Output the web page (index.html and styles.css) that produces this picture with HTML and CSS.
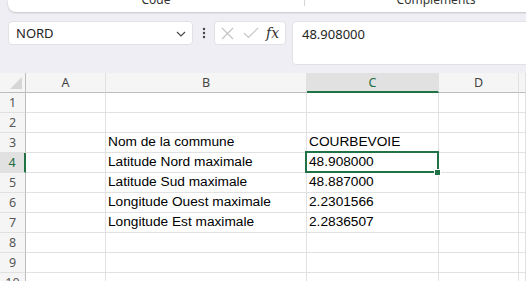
FILE: index.html
```html
<!DOCTYPE html>
<html>
<head>
    <title>Classeur - Communes</title>
    <link rel="stylesheet" href="styles.css">
</head>
<body>
    <div class="ribbon">
        <div class="group group-code"><span>Code</span></div>
        <div class="group group-comp"><span>Compléments</span></div>
    </div>

    <div class="toolbar">
        <div class="namebox">
            <span>NORD</span>
            <svg class="chevron" width="10" height="6" viewBox="0 0 10 6"><path d="M1 1 L5 5 L9 1" fill="none" stroke="#444" stroke-width="1.1"/></svg>
        </div>
        <div class="dots">
            <svg width="4" height="12" viewBox="0 0 4 12"><circle cx="2" cy="2" r="1.2" fill="#444"/><circle cx="2" cy="6" r="1.2" fill="#444"/><circle cx="2" cy="10" r="1.2" fill="#444"/></svg>
        </div>
        <div class="fxbox">
            <svg width="13" height="13" viewBox="0 0 13 13"><path d="M1 1 L12 12 M12 1 L1 12" stroke="#c4c4c4" stroke-width="1.1"/></svg>
            <svg width="16" height="12" viewBox="0 0 16 12"><path d="M1 6 L5.5 10.5 L15 1" fill="none" stroke="#c4c4c4" stroke-width="1.1"/></svg>
            <span class="fx">fx</span>
        </div>
        <div class="formula">48.908000</div>
    </div>

    <div class="sheet">
        <div class="row head">
            <div class="cell corner"><span class="tri"></span></div>
            <div class="cell col">A</div>
            <div class="cell col">B</div>
            <div class="cell col active">C</div>
            <div class="cell col">D</div>
            <div class="cell col"></div>
        </div>
        <div class="row">
            <div class="cell num">1</div>
            <div class="cell"></div><div class="cell"></div><div class="cell"></div><div class="cell"></div><div class="cell"></div>
        </div>
        <div class="row">
            <div class="cell num">2</div>
            <div class="cell"></div><div class="cell"></div><div class="cell"></div><div class="cell"></div><div class="cell"></div>
        </div>
        <div class="row">
            <div class="cell num">3</div>
            <div class="cell"></div><div class="cell">Nom de la commune</div><div class="cell">COURBEVOIE</div><div class="cell"></div><div class="cell"></div>
        </div>
        <div class="row">
            <div class="cell num active">4</div>
            <div class="cell"></div><div class="cell">Latitude Nord maximale</div>
            <div class="cell selected">48.908000<span class="handle"></span></div>
            <div class="cell"></div><div class="cell"></div>
        </div>
        <div class="row">
            <div class="cell num">5</div>
            <div class="cell"></div><div class="cell">Latitude Sud maximale</div><div class="cell">48.887000</div><div class="cell"></div><div class="cell"></div>
        </div>
        <div class="row">
            <div class="cell num">6</div>
            <div class="cell"></div><div class="cell">Longitude Ouest maximale</div><div class="cell">2.2301566</div><div class="cell"></div><div class="cell"></div>
        </div>
        <div class="row">
            <div class="cell num">7</div>
            <div class="cell"></div><div class="cell">Longitude Est maximale</div><div class="cell">2.2836507</div><div class="cell"></div><div class="cell"></div>
        </div>
        <div class="row">
            <div class="cell num">8</div>
            <div class="cell"></div><div class="cell"></div><div class="cell"></div><div class="cell"></div><div class="cell"></div>
        </div>
        <div class="row">
            <div class="cell num">9</div>
            <div class="cell"></div><div class="cell"></div><div class="cell"></div><div class="cell"></div><div class="cell"></div>
        </div>
        <div class="row">
            <div class="cell num">10</div>
            <div class="cell"></div><div class="cell"></div><div class="cell"></div><div class="cell"></div><div class="cell"></div>
        </div>
    </div>
</body>
</html>
```

FILE: styles.css
```css
html, body { margin: 0; height: 100%; overflow: hidden; }
body {
    background: #efeef5;
    font-family: "Noto Sans", "Open Sans", sans-serif;
    color: #242424;
}

/* ruban */
.ribbon {
    display: flex;
    height: 12px;
    margin-left: 8px;
    width: 560px;
    background: #fff;
    border-radius: 0 0 8px 8px;
    box-shadow: 0 1px 2px rgba(0,0,0,0.18);
    overflow: hidden;
}
.group { display: flex; justify-content: center; font-size: 12px; line-height: 12px; color: #333; }
.group span { margin-top: -6px; }
.group-code { width: 296px; border-right: 1px solid #d6d6d6; height: 6px; overflow: visible; }
.group-comp { width: 262px; }

/* barre de formule */
.toolbar { display: flex; margin: 9px 0 0 8px; height: 44px; align-items: flex-start; }
.namebox, .fxbox, .formula {
    background: #fff;
    border: 1px solid #e1e1e6;
    border-radius: 4px;
    box-sizing: border-box;
}
.namebox {
    width: 185px; height: 24px;
    display: flex; align-items: center; justify-content: space-between;
    padding: 0 6px 0 7px;
    font-size: 13px;
}
.chevron { margin-top: 1px; }
.dots { width: 21px; height: 24px; display: flex; align-items: center; justify-content: center; }
.fxbox {
    width: 72px; height: 24px;
    display: flex; align-items: center; gap: 9px;
    padding-left: 6px;
}
.fx { font-family: "DejaVu Serif", "Liberation Serif", serif; font-style: italic; font-size: 14px; color: #333; margin-left: -2px; }
.formula {
    flex: 1; height: 44px;
    margin-left: 6px; margin-right: -10px;
    padding: 3px 0 0 9px;
    font-size: 13px;
    line-height: 18px;
}

/* feuille */
.sheet { margin-top: 8px; background: #fff; }
.row {
    display: grid;
    grid-template-columns: 26px 80px 201px 132px 80px 1fr;
    height: 20px;
}
.cell {
    box-sizing: border-box;
    border-right: 1px solid #e1e1e1;
    border-bottom: 1px solid #e1e1e1;
    font-family: "Liberation Sans", Arial, sans-serif;
    font-size: 13.7px;
    color: #000;
    padding: 0 0 3px 2px;
    display: flex;
    align-items: flex-end;
    white-space: nowrap;
    overflow: visible;
}
.head .cell {
    background: #f5f5f5;
    border-bottom: 1px solid #bdbdbd;
    border-right-color: #e1e1e1;
    justify-content: center;
    align-items: center;
    padding: 0;
    font-family: "Noto Sans", sans-serif;
    font-size: 12.5px;
    color: #444;
}
.head .corner { position: relative; border-right: 1px solid #bdbdbd; }
.tri {
    position: absolute; right: 3px; bottom: 3px;
    width: 0; height: 0;
    border-left: 12px solid transparent;
    border-bottom: 12px solid #d6d6d6;
}
.num {
    background: #f5f5f5;
    border-right: 1px solid #bdbdbd;
    justify-content: center;
    align-items: center;
    padding: 0;
    font-family: "Noto Sans", sans-serif;
    font-size: 12.5px;
    color: #555;
}
.head .active {
    background: #e1e1e1;
    color: #1f6b42;
    border-bottom: 2px solid #217346;
}
.num.active {
    background: #e1e1e1;
    color: #1f6b42;
    border-right: 2px solid #217346;
}
.selected { position: relative; }
.selected::after {
    content: "";
    position: absolute;
    left: -2px; top: -2px; right: -1px; bottom: -1px;
    border: 2px solid #217346;
}
.handle {
    position: absolute;
    right: -3px; bottom: -4px;
    width: 5px; height: 5px;
    background: #217346;
    border: 1px solid #fff;
    z-index: 1;
}
```
